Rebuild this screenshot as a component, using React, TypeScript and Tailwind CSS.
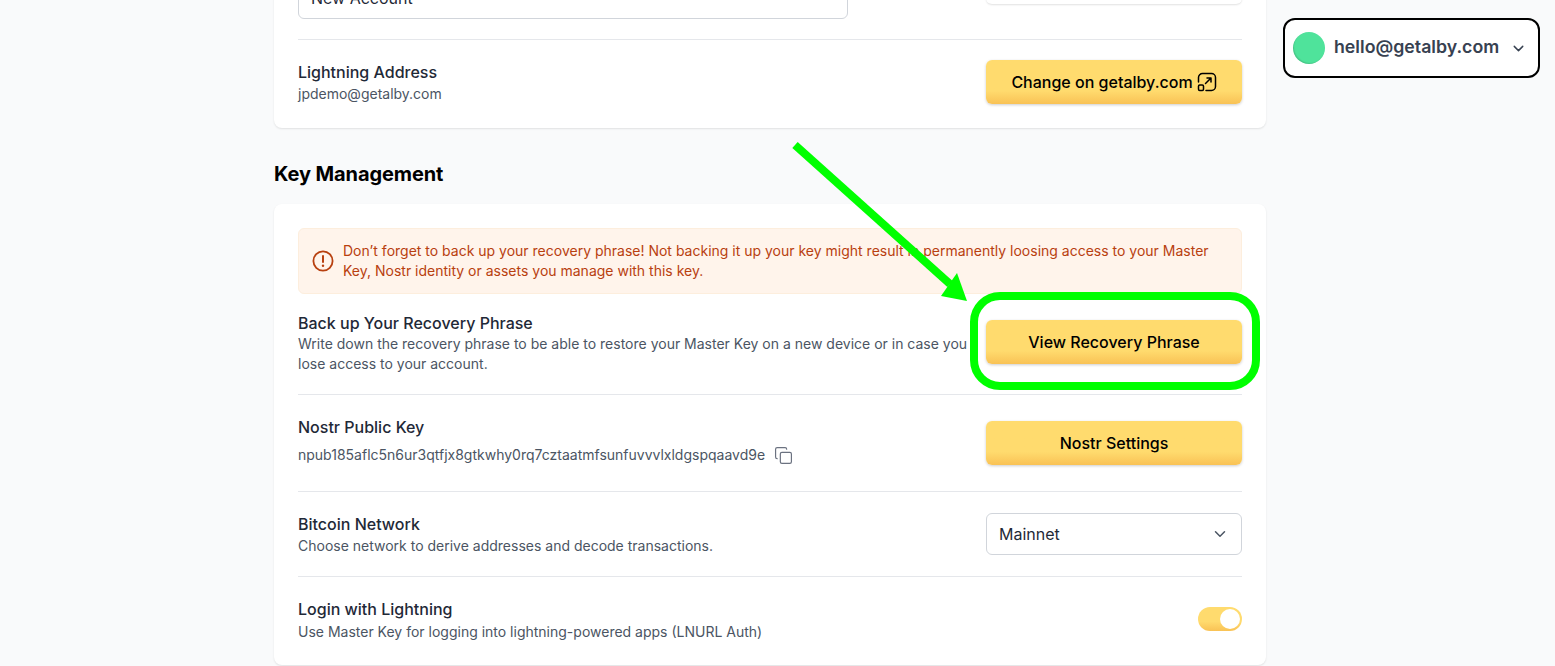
import { ChevronDown, Copy } from 'lucide-react'

const btn = 'w-[256px] h-11 rounded-md bg-gradient-to-b from-[#ffdb6e] from-70% to-[#f9c255] shadow-[0_1px_3px_rgba(0,0,0,0.2)] text-black font-medium text-base flex items-center justify-center gap-1'

function ExternalIcon() {
  return (
    <svg width="20" height="20" viewBox="0 0 20 20" fill="none" stroke="currentColor" strokeWidth="1.5" strokeLinecap="round" strokeLinejoin="round">
      <path d="M1.5 10V5.5a4 4 0 0 1 4-4h9a4 4 0 0 1 4 4v9a4 4 0 0 1-4 4H9" />
      <rect x="1.5" y="13" width="5" height="5.5" rx="1.2" />
      <path d="M8.5 11.5 14 6M10 6h4v4" />
    </svg>
  )
}

function AlertIcon() {
  return (
    <svg width="24" height="24" viewBox="0 0 24 24" fill="none" stroke="#b8400f" strokeWidth="1.8" strokeLinecap="round">
      <circle cx="12" cy="12" r="9.6" />
      <path d="M12 7v6" strokeWidth="2" />
      <path d="M12 16.6v.2" strokeWidth="2.4" />
    </svg>
  )
}

function Row({ title, desc, right, cls, leftCls = '' }: { title: string; desc?: React.ReactNode; right: React.ReactNode; cls: string; leftCls?: string }) {
  return (
    <div className={`flex items-center justify-between ${cls}`}>
      <div className={`w-[680px] shrink-0 ${leftCls}`}>
        <div className="text-base leading-[22px] font-medium text-[#1f2937]">{title}</div>
        {desc}
      </div>
      {right}
    </div>
  )
}

export default function App() {
  return (
    <div className="relative h-[666px] overflow-hidden bg-[#f9fafb] font-['Inter',sans-serif]">
      <div className="flex items-start">
        <main className="ml-[274px] w-[992px] shrink-0 -mt-[60px]">
          <div className="bg-white rounded-lg shadow-[0_1px_2px_rgba(0,0,0,0.1)] px-6 h-[188px] flex flex-col">
            <div className="h-[80px] shrink-0 flex items-start justify-between">
              <div className="mt-[37px] w-[550px] h-[42px] rounded-md border border-[#d1d5db] px-3 flex items-center text-base text-[#1f2937]">New Account</div>
              <div className="mt-[20px] w-[256px] h-11 rounded-md bg-white shadow-[0_1px_2px_rgba(0,0,0,0.12)]" />
            </div>
            <div className="h-[20px] shrink-0 border-b border-[#e5e7eb]" />
            <Row
              title="Lightning Address"
              desc={<div className="mt-px text-sm leading-[20px] text-[#4b5563]">jpdemo@getalby.com</div>}
              right={<button className={btn}>Change on getalby.com <ExternalIcon /></button>}
              cls="pt-5"
              leftCls="mt-px"
            />
          </div>
          <h2 className="mt-[33px] text-xl leading-[26px] font-bold tracking-[-0.005em] text-black">Key Management</h2>
          <div className="mt-[17px] bg-white rounded-lg shadow-[0_1px_2px_rgba(0,0,0,0.1)] px-6 pt-6 h-[461px]">
            <div className="h-[66px] rounded-md bg-[#fff4eb] border border-[#fdeedd] flex items-center pl-3 pr-6 gap-2 text-sm leading-[20px] text-[#b8400f]">
              <span className="shrink-0"><AlertIcon /></span>
              <p>Don’t forget to back up your recovery phrase! Not backing it up your key might result in permanently loosing access to your Master Key, Nostr identity or assets you manage with this key.</p>
            </div>
            <Row
              title="Back up Your Recovery Phrase"
              desc={<p className="text-sm leading-[20.5px] text-[#4b5563]">Write down the recovery phrase to be able to restore your Master Key on a new device or in case you lose access to your account.</p>}
              right={<button className={`${btn} mb-1`}>View Recovery Phrase</button>}
              cls="h-[101px] border-b border-[#e5e7eb]"
              leftCls="mb-[2px]"
            />
            <Row
              title="Nostr Public Key"
              desc={<div className="mt-[7px] flex items-center gap-2 text-sm leading-[20px] text-[#4b5563]">npub185aflc5n6ur3qtfjx8gtkwhy0rq7cztaatmfsunfuvvvlxldgspqaavd9e <Copy size={19} strokeWidth={1.5} className="ml-px text-[#6b7280]" /></div>}
              right={<button className={btn}>Nostr Settings</button>}
              cls="h-[97px] border-b border-[#e5e7eb]"
              leftCls="mb-[5px]"
            />
            <Row
              title="Bitcoin Network"
              desc={<div className="mt-px text-sm leading-[20px] text-[#4b5563]">Choose network to derive addresses and decode transactions.</div>}
              right={
                <div className="w-[256px] h-[42px] rounded-md border border-[#d1d5db] px-3 flex items-center justify-between text-base text-[#1f2937]">
                  Mainnet <ChevronDown size={18} className="text-[#4b5563]" />
                </div>
              }
              cls="h-[85px] border-b border-[#e5e7eb]"
            />
            <Row
              title="Login with Lightning"
              desc={<div className="mt-[2px] text-sm leading-[20px] text-[#4b5563]">Use Master Key for logging into lightning-powered apps (LNURL Auth)</div>}
              right={
                <div className="mb-1 w-11 h-6 rounded-full bg-gradient-to-b from-[#ffdb6e] from-60% to-[#f9c255] flex items-center justify-end pr-0.5">
                  <span className="w-5 h-5 rounded-full bg-white" />
                </div>
              }
              cls="h-[88px]"
              leftCls="mb-[2px]"
            />
          </div>
        </main>
        <div className="ml-[17px] mt-[18px] w-[257px] h-[60px] rounded-[12px] border-2 border-black bg-white flex items-center pl-2 pr-[11px]">
          <span className="w-8 h-8 rounded-full bg-[#4fe39b] shrink-0 -mt-px shadow-[inset_1px_-1px_1px_rgba(40,90,60,0.2)]" />
          <span className="ml-[9px] -mt-px text-[17.75px] font-semibold text-[#374151] whitespace-nowrap">hello@getalby.com</span>
          <ChevronDown size={17} className="ml-auto text-[#374151]" />
        </div>
      </div>

      {/* annotation drawn on top of the screenshot */}
      <svg className="absolute left-0 top-0 pointer-events-none" width="1555" height="666" fill="none">
        <path d="M795 145 L950 284" stroke="#00ff00" strokeWidth="8" />
        <path d="M967 301 L941 296 L957 273 Z" fill="#00ff00" />
      </svg>
      <div className="absolute left-[970px] top-[292px] w-[290px] h-[98px] rounded-[30px] border-[8px] border-[#00ff00] pointer-events-none" />
    </div>
  )
}
